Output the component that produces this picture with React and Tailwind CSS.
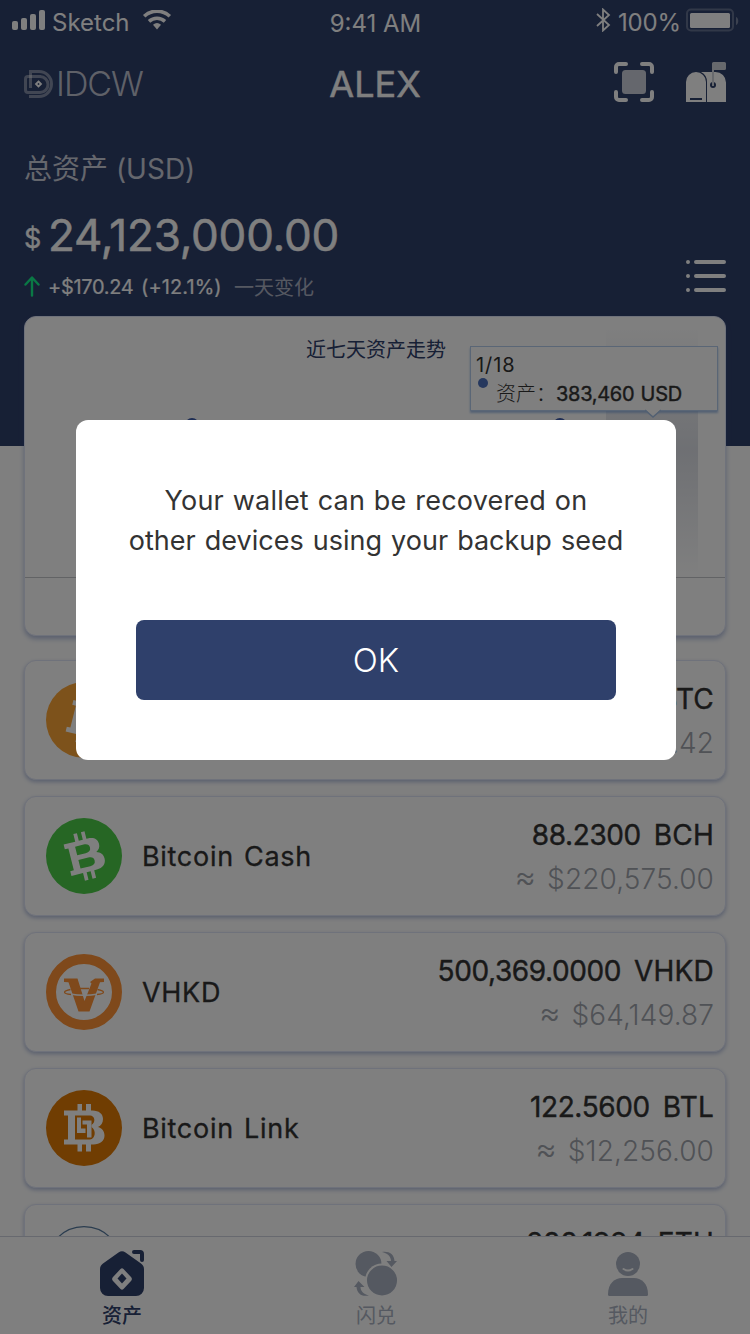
const FONT = 'font-["Inter","Noto_Sans_CJK_SC",sans-serif]';

function StatusBar() {
  return (
    <div className="flex h-10 items-center justify-between pl-3 pr-[11px] text-[24px] leading-[40px] text-white">
      <div className="flex w-[317px] items-center">
        <svg width="33" height="20" viewBox="0 0 33 20" fill="currentColor">
          <rect x="0" y="11" width="6" height="9" rx="2" />
          <rect x="9" y="8" width="6" height="12" rx="2" />
          <rect x="18" y="4" width="6" height="16" rx="2" />
          <rect x="27" y="0" width="6" height="20" rx="2" />
        </svg>
        <span className="mt-[5px] ml-[7px] w-[78px] whitespace-nowrap">Sketch</span>
        <svg className="ml-3" width="30" height="20" viewBox="0 0 30 20" fill="none" stroke="currentColor" strokeWidth="3.6">
          <path d="M2.2 6.3a18.6 18.6 0 0 1 25.6 0" />
          <path d="M7 11.3a12 12 0 0 1 16 0" />
          <path d="M11 14.8a6.2 6.2 0 0 1 8 0L15 19.6z" fill="currentColor" stroke="none" />
        </svg>
      </div>
      <span className="mt-2 whitespace-nowrap">9:41 AM</span>
      <div className="flex w-[317px] items-center justify-end">
        <svg width="15" height="24" viewBox="0 0 15 24" fill="none" stroke="currentColor" strokeWidth="1.8">
          <path d="M1 6l12 11-6 5.5V1.5L13 7 1 18" />
        </svg>
        <span className="mt-[6px] ml-[7px] w-[62px] tracking-[-0.2px] whitespace-nowrap">100%</span>
        <svg className="ml-[6px]" width="53" height="24" viewBox="0 0 53 24">
          <rect x="1" y="1.500" width="46" height="21" rx="4" fill="none" stroke="#fff" strokeOpacity=".25" strokeWidth="2" />
          <rect x="4" y="5" width="40" height="15" rx="1.5" fill="#fff" />
          <path d="M50 9c3 1 3 7 0 8z" fill="#fff" fillOpacity=".35" />
        </svg>
      </div>
    </div>
  );
}

function Header() {
  return (
    <div className="flex h-[88px] items-center justify-between px-6 text-white">
      <div className="flex w-[240px] items-center text-white/70">
        <svg width="30" height="28" viewBox="0 0 30 28" fill="none" stroke="#fff" strokeWidth="3">
          <path d="M6.500 18V1.500H15a12.500 12.500 0 0 1 0 25H5" strokeOpacity=".4" />
          <path d="M17 6.500H4A2.500 2.500 0 0 0 1.500 9v11A2.500 2.500 0 0 0 4 22.500h12a8 8 0 0 0 0-16z" strokeOpacity=".4" />
          <path d="M14.500 11.500l2.500 2.500-2.500 2.500L12 14z" stroke="#fff" strokeWidth="1.800" />
        </svg>
        <span className="ml-[2px] text-[34px] font-light leading-[40px] tracking-[-1px]">IDCW</span>
      </div>
      <h1 className="text-[36px] font-normal leading-[44px] [-webkit-text-stroke:0.5px]">ALEX</h1>
      <div className="mb-1 flex w-[240px] items-center justify-end gap-8">
        <svg width="40" height="40" viewBox="0 0 40 40">
          <g fill="none" stroke="#fff" strokeWidth="4" strokeLinecap="round">
            <path d="M2 10V5a3 3 0 0 1 3-3h7M28 2h7a3 3 0 0 1 3 3v5M38 30v5a3 3 0 0 1-3 3h-7M12 38H5a3 3 0 0 1-3-3v-5" />
          </g>
          <rect x="8" y="8" width="24" height="24" rx="3.500" fill="#fff" fillOpacity=".75" />
        </svg>
        <svg width="40" height="40" viewBox="0 0 40 40" fill="#fff">
          <path fillRule="evenodd" d="M0 40V20a10 10 0 0 1 20 0v20zM4 36v2h12v-2z" />
          <path d="M15 10h14.500A10.500 10.500 0 0 1 40 20.500V40H21V20a11 11 0 0 0-6-10z" />
          <circle cx="27" cy="23" r="3" fill="#2f406b" />
          <path d="M26 24V1.500A1.500 1.500 0 0 1 27.500 0H38.500A1.500 1.500 0 0 1 40 1.500v5A1.500 1.500 0 0 1 38.500 8H28v16z" fill="#cfd2da" />
        </svg>
      </div>
    </div>
  );
}

function Summary() {
  return (
    <div className="px-6 text-white">
      <div className="pt-[21px] text-[28px] leading-[40px] text-white/75">总资产 (USD)</div>
      <div className="mt-[13px] flex h-[64px] items-start whitespace-nowrap">
        <span className="w-[24px] pt-[5px] text-[27px] leading-[64px] [-webkit-text-stroke:0.3px]">$</span>
        <span className="pt-px text-[44px] leading-[64px] tracking-[-0.2px] [-webkit-text-stroke:0.5px]">24,123,000.00</span>
      </div>
      <div className="flex items-start justify-between">
        <div className="flex h-10 items-center text-[20px] whitespace-nowrap">
          <svg width="16" height="21" viewBox="0 0 16 21" fill="none" stroke="#14f08a" strokeWidth="2.400" strokeLinecap="round" strokeLinejoin="round">
            <path d="M8 19.500V2M1.500 8.500L8 1.500l6.500 7" />
          </svg>
          <span className="mt-[2px] ml-2 w-[93px] tracking-[-0.3px] [-webkit-text-stroke:0.2px]">+$170.24</span>
          <span className="mt-[2px] w-[93px] tracking-[0.1px] [-webkit-text-stroke:0.2px]">(+12.1%)</span>
          <span className="mt-[3px] text-white/60">一天变化</span>
        </div>
        <svg className="-mt-[6px]" width="40" height="32" viewBox="0 0 40 32" stroke="#fff" strokeWidth="4" strokeLinecap="round">
          <path d="M2 2h0M10 2h28M2 16h0M10 16h28M2 30h0M10 30h28" />
        </svg>
      </div>
    </div>
  );
}

function ChartCard() {
  return (
    <section className="relative mx-6 -mt-[130px] h-[320px] shrink-0 rounded-xl border border-[#dfe4f6] bg-white shadow-[0_3px_5px_rgba(50,80,160,0.36)]">
      <h2 className="pt-[18px] pl-[2px] text-center text-[20px] leading-[30px] text-[#2f406b]">近七天资产走势</h2>
      <div className="absolute top-2 left-[581px] h-[252px] w-[92px] bg-linear-to-b from-[#2f406b]/0 via-[#2f406b]/16 via-50% to-[#2f406b]/0" />
      <svg className="absolute top-0 left-0" width="700" height="260" fill="#3c5aa8">
        <circle cx="167" cy="108" r="7" />
        <circle cx="535" cy="108" r="7" />
      </svg>
      <div className="absolute top-[260px] right-0 left-0 h-px bg-[#c4c6ca]" />
      <div className="absolute top-[29px] left-[445px] h-[65px] w-[248px] border border-[#b5cdec] bg-white text-[20px] text-[#333] shadow-[0_2px_2px_rgba(110,155,215,0.6)]">
        <div className="pt-[3px] pl-[5px] leading-[30px] tracking-[0.9px]">1/18</div>
        <div className="flex leading-[28px] whitespace-nowrap">
          <span className="-mt-[2px] mr-2 ml-[7px] size-[10px] rounded-full bg-[#4d70bd]" />
          <span className="w-[60px] font-light">资产：</span>
          <span className="tracking-[-0.3px] [-webkit-text-stroke:0.4px] [word-spacing:1px]">383,460 USD</span>
        </div>
        <svg className="absolute top-[62px] left-[174px]" width="16" height="9" viewBox="0 0 16 9">
          <path d="M0 0l8 8 8-8z" fill="#fff" />
          <path d="M0 1l8 7 8-7" fill="none" stroke="#a5c0e4" strokeWidth="1.500" />
        </svg>
      </div>
    </section>
  );
}

const B_OUTER =
  "M-20-17.500H-6.500V-24h4.500v6.500h4V-24H7v6.500h1.500c6.500 0 10.500 3.500 10.500 8.500 0 4-2 6.500-5 8 4 1.200 6.500 4 6.500 8.500 0 5.500-4.500 9-11 9H7v7H2v-7h-4v7h-4.500v-7H-20v-5h4v-24h-4z";
const B_SLIM =
  "M-19-16.500H-6V-24.500h4v8h4.500v-8h4v8H8c6.500 0 10.500 3 10.500 8 0 4-2 6-5 7.500 4.500 1.200 7 4 7 8.500 0 5.500-4.500 9-11 9H6.500v8h-4v-8H-2v8h-4v-8H-19v-5h4v-23h-4z";
const B_HOLES = "M-7.500-11.500v9h9.500c4 0 6-1.500 6-4.500s-2-4.500-6-4.500zM-7.500 2.500v9h11c4 0 6-1.500 6-4.500S7.500 2.500 3.500 2.500z";

function CoinIcon({ kind }) {
  if (kind === "ETH")
    return (
      <svg width="76" height="76" viewBox="-38 -38 76 76">
        <circle r="37.400" fill="#fff" stroke="#55799e" strokeWidth="1.200" />
        <path d="M0-27L16 0 0 10-16 0zM0 14l16-10L0 27-16 4z" fill="#55799e" />
      </svg>
    );
  if (kind === "VHKD")
    return (
      <svg width="76" height="76" viewBox="-38 -38 76 76">
        <circle r="33" fill="#fff" stroke="#ff9236" strokeWidth="10" />
        <path d="M-20-13.500H-6.500L.5 9 7.500-8.500 6-10 11-13.500H20v3.500l-4 .3L5.500 19.500H-5.500L-15.500-9.700-20-10z" fill="#ff9236" />
        <path d="M-14 2Q0 4.500 14 2" fill="none" stroke="#fff" strokeWidth="1.300" />
        <path d="M-13.500-2.500C-21-1-22 1.500-13 2.500M13.500-2.500C21-1 22 1.500 13 2.500M-4-3.500H5" fill="none" stroke="#ff9236" strokeWidth="1.300" />
      </svg>
    );
  if (kind === "BTL")
    return (
      <svg width="76" height="76" viewBox="-38 -38 76 76">
        <circle r="38" fill="#e07a04" />
        <path d={B_OUTER} fill="#fff" />
        <path d="M-9-12.500H6c5 0 6 7 1.500 9.500V-1c5 3 4 12-1.500 12.500H-9z" fill="#e07a04" />
        <path d="M-7-10.500h4V0.500H1.500V5H-7zM-1.500-7.500H7.500V9.500H3V-3.500h-4.500z" fill="#fff" />
      </svg>
    );
  return (
    <svg width="76" height="76" viewBox="-38 -38 76 76">
      <circle r="38" fill={kind === "BCH" ? "#4ccc48" : "#fba436"} />
      <path
        d={B_SLIM + B_HOLES}
        fill="#fff"
        fillRule="evenodd"
        transform={kind === "BCH" ? "translate(.5 0) rotate(-14) scale(.92 .98)" : "translate(2.500 0) rotate(14) scale(.92 .98)"}
      />
    </svg>
  );
}

const coins = [
  { kind: "BTC", name: "Bitcoin", amount: "12.3400", value: "$86,241.42" },
  { kind: "BCH", name: "Bitcoin Cash", amount: "88.2300", value: "$220,575.00" },
  { kind: "VHKD", name: "VHKD", amount: "500,369.0000", value: "$64,149.87" },
  { kind: "BTL", name: "Bitcoin Link", amount: "122.5600", value: "$12,256.00" },
  { kind: "ETH", name: "Ethereum", amount: "200.1984", value: "$42,041.66" },
];

function CoinRow({ coin }) {
  return (
    <li className="flex h-[120px] shrink-0 items-center rounded-xl border border-[#dfe4f6] bg-white pr-[11px] pl-[21px] shadow-[0_2px_4px_rgba(50,80,160,0.36)]">
      <CoinIcon kind={coin.kind} />
      <span className="mt-[2px] ml-5 flex-1 text-[27px] tracking-[0.7px] text-[#333] [-webkit-text-stroke:0.3px] [word-spacing:2px]">
        {coin.name}
      </span>
      <div className="pt-[2px] text-right text-[28px] leading-[44px] whitespace-nowrap">
        <div className="flex justify-end gap-[13px] text-[#333] [-webkit-text-stroke:0.4px]">
          <span className="tracking-[-0.4px]">{coin.amount}</span>
          <span className="tracking-[0.2px]">{coin.kind}</span>
        </div>
        <div className="flex justify-end gap-[11px] font-light text-[#a0a4ac]">
          <span className="-mt-[3px] h-10 text-[33px]">≈</span>
          <span className="tracking-[0.1px]">{coin.value}</span>
        </div>
      </div>
    </li>
  );
}

function TabBar() {
  return (
    <nav className="relative flex h-[98px] shrink-0 justify-between border-t border-[#cfd3df] bg-white px-[82px] text-[20px] leading-[30px] text-[#aab2c2]">
      <div className="flex w-20 flex-col items-center pt-[12px] text-[#2f406b]">
        <svg width="46" height="48" viewBox="-1 -1 46 48" fill="currentColor">
          <path fillRule="evenodd" d="M18.500 2.500a6 6 0 0 1 7 0L41 13.500a7 7 0 0 1 3 6V38a8 8 0 0 1-8 8H8a8 8 0 0 1-8-8V19.500a7 7 0 0 1 3-6zM20.500 19l-7.500 8a3 3 0 0 0 0 4l7.500 8q1.500 1.500 3 0l7.500-8a3 3 0 0 0 0-4l-7.500-8q-1.500-1.500-3 0z" />
          <path d="M22 23.500l4.500 5-4.500 5-4.500-5z" />
          <path d="M34 0h6a4 4 0 0 1 4 4v6a2 2 0 0 1-4 0V4H34a2 2 0 0 1 0-4z" />
        </svg>
        <span className="mt-[4px] font-medium">资产</span>
      </div>
      <div className="ml-[2px] flex w-[82px] flex-col items-center pt-[12px]">
        <svg width="44" height="48" viewBox="0 0 44 48">
          <circle cx="14.500" cy="15" r="13" fill="currentColor" />
          <circle cx="28" cy="31.500" r="17" fill="#fff" />
          <circle cx="28" cy="31.500" r="15" fill="currentColor" />
          <path d="M28 3c7-1 12 2 12.500 9H43l-5.500 6-5-6H37C37 7 33 4 28 3zM15 46.500C7 48 3 44 2.500 38H0l4.500-6 6 6H6.500c0 4 3.500 7.500 8.500 8.500z" fill="currentColor" />
        </svg>
        <span className="mt-[4px]">闪兑</span>
      </div>
      <div className="flex w-20 flex-col items-center pt-[12px]">
        <svg width="40" height="48" viewBox="0 0 40 48" fill="currentColor">
          <circle cx="20" cy="15" r="12" />
          <path d="M0 45.500C0 34 7 29 14 29h12c7 0 14 5 14 16.500q0 1.500-1.500 1.500h-37q-1.500 0-1.500-1.500z" />
          <path d="M15.500 20q4.500 3 9 0" fill="none" stroke="#fff" strokeWidth="2" strokeLinecap="round" />
        </svg>
        <span className="mt-[4px]">我的</span>
      </div>
    </nav>
  );
}

function BackupDialog() {
  return (
    <div className="absolute inset-0 flex items-start bg-black/50 px-[76px] pt-[420px]">
      <div role="dialog" className="flex h-[340px] w-[600px] shrink-0 flex-col items-center rounded-xl bg-white pt-[61px]">
        <p className="flex flex-col items-center text-[27px] leading-[40px] whitespace-nowrap text-[#333]">
          <span className="tracking-[0.2px] [word-spacing:1px]">Your wallet can be recovered on</span>
          <span className="tracking-[0px] [word-spacing:1.5px]">other devices using your backup seed</span>
        </p>
        <button className="mt-[59px] h-20 w-[480px] rounded-lg bg-[#2f406b] pt-[2px] text-[33px] font-light text-white">OK</button>
      </div>
    </div>
  );
}

export default function App() {
  return (
    <div className={`relative flex h-[1334px] w-[750px] flex-col overflow-hidden bg-white ${FONT}`}>
      <header className="h-[446px] shrink-0 bg-[#2f406b]">
        <StatusBar />
        <Header />
        <Summary />
      </header>
      <main className="flex min-h-0 flex-1 flex-col">
        <ChartCard />
        <ul className="mx-6 mt-6 flex flex-col gap-4">
          {coins.map((coin) => (
            <CoinRow key={coin.kind} coin={coin} />
          ))}
        </ul>
      </main>
      <TabBar />
      <BackupDialog />
    </div>
  );
}
